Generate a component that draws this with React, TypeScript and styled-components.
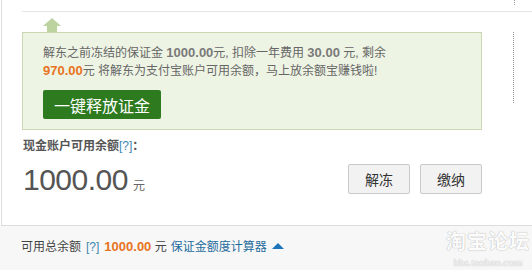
import React from 'react';
import styled, { createGlobalStyle } from 'styled-components';

const Global = createGlobalStyle`
  html, body { margin: 0; padding: 0; background: #fff; }
  body { font-family: "Liberation Sans", "Noto Sans CJK SC", sans-serif; font-size: 12px; color: #666; }
`;

const Page = styled.div`
  position: relative;
  width: 532px;
  height: 270px;
  overflow: hidden;
  background: #fff;
`;

const Panel = styled.div`
  margin-left: 1px;
  height: 226px;
  box-sizing: border-box;
  border-left: 1px solid #dcdcdc;
  border-bottom: 1px solid #dcdcdc;
`;

const TopStrip = styled.div`
  height: 11px;
  display: flex;
  justify-content: flex-end;
  padding-right: 17px;
`;

const Dots = styled.div<{ $h: number }>`
  width: 0;
  height: ${p => p.$h}px;
  border-left: 1px dotted #999;
`;

const Divider = styled.div`
  margin-left: 20px;
  border-top: 1px solid #e6e6e6;
`;

const Arrow = styled.div`
  margin: 6px 0 0 41px;
  width: 18px;
  height: 14px;
  display: flex;
  flex-direction: column;
  align-items: center;
`;

const ArrowHead = styled.div`
  width: 0;
  height: 0;
  border-left: 9px solid transparent;
  border-right: 9px solid transparent;
  border-bottom: 8px solid #bcd3a0;
`;

const ArrowStem = styled.div`
  width: 10px;
  height: 6px;
  background: #bcd3a0;
`;

const NoticeRow = styled.div`
  display: flex;
  align-items: flex-start;
`;

const Notice = styled.div`
  margin-left: 20px;
  width: 460px;
  height: 98px;
  box-sizing: border-box;
  border: 1px solid #c9d8b0;
  background: #eef4e4;
  padding: 11px 20px 0;
`;

const NoticeText = styled.p`
  margin: 0;
  line-height: 18px;
  color: #666;
`;

const Gray = styled.b`
  font-size: 13px;
  color: #7a7a7a;
`;

const Orange = styled.b<{ $size?: number }>`
  font-size: ${p => p.$size ?? 13}px;
  color: #e8731d;
`;

const ReleaseButton = styled.button`
  margin-top: 10px;
  width: 118px;
  height: 29px;
  border: 0;
  border-radius: 2px;
  background: #2e7a1f;
  color: #fff;
  font-family: inherit;
  font-size: 16px;
  padding: 0;
`;

const Side = styled.div`
  margin-left: 31px;
`;

const Balance = styled.div`
  padding: 7px 50px 0 21px;
`;

const Label = styled.div`
  font-weight: bold;
  color: #555;
  line-height: 18px;
`;

const Help = styled.span`
  font-weight: normal;
  color: #3a88b0;
`;

const AmountRow = styled.div`
  margin-top: 5px;
  display: flex;
  justify-content: space-between;
  align-items: center;
`;

const Amount = styled.div`
  color: #555;
  font-size: 30px;
  line-height: 40px;
  letter-spacing: -0.5px;
`;

const Unit = styled.span`
  font-size: 12px;
  margin-left: 5px;
  color: #666;
  letter-spacing: 0;
`;

const Actions = styled.div`
  display: flex;
  gap: 10px;
  margin-top: -8px;
`;

const GrayButton = styled.button`
  width: 62px;
  height: 30px;
  box-sizing: border-box;
  border: 1px solid #c9c9c9;
  border-radius: 2px;
  background: #f2f2f2;
  color: #333;
  font-family: inherit;
  font-size: 14px;
  padding: 0;
`;

const Footer = styled.div`
  height: 44px;
  background: #f7f7f7;
  padding: 12px 0 0 21px;
  box-sizing: border-box;
  line-height: 18px;
  color: #444;
  font-size: 12px;
`;

const FooterHelp = styled.span`
  color: #3a88b0;
  margin: 0 5px;
`;

const Link = styled.span`
  color: #1f6d9e;
  margin-left: 4px;
`;

const Caret = styled.span`
  display: inline-block;
  margin-left: 5px;
  width: 0;
  height: 0;
  border-left: 6px solid transparent;
  border-right: 6px solid transparent;
  border-bottom: 6px solid #1f75b8;
  vertical-align: 2px;
`;

const Watermark = styled.div`
  position: absolute;
  right: 2px;
  top: 230px;
  display: flex;
  flex-direction: column;
  align-items: center;
  gap: 4px;
  color: #fbfbfb;
  text-shadow: 0 0 1px #bbb, 0 0 1px #bbb;
  font-family: "Noto Sans CJK SC", sans-serif;
`;

const WmBig = styled.div`
  font-size: 20px;
  font-weight: bold;
  line-height: 22px;
  letter-spacing: 1px;
`;

const WmSmall = styled.div`
  font-family: "Liberation Serif", serif;
  font-size: 11px;
  line-height: 12px;
`;

export default function App() {
  return (
    <Page>
      <Global />
      <Panel>
        <TopStrip>
          <Dots $h={5} />
        </TopStrip>
        <Divider />
        <Arrow>
          <ArrowHead />
          <ArrowStem />
        </Arrow>
        <NoticeRow>
          <Notice>
            <NoticeText>
              解东之前冻结的保证金 <Gray>1000.00</Gray>元, 扣除一年费用 <Gray>30.00</Gray> 元, 剩余
              <br />
              <Orange>970.00</Orange>元 将解东为支付宝账户可用余额，马上放余额宝赚钱啦!
            </NoticeText>
            <ReleaseButton>一键释放证金</ReleaseButton>
          </Notice>
          <Side>
            <Dots $h={71} />
          </Side>
        </NoticeRow>
        <Balance>
          <Label>
            现金账户可用余额<Help>[?]</Help>：
          </Label>
          <AmountRow>
            <Amount>
              1000.00<Unit>元</Unit>
            </Amount>
            <Actions>
              <GrayButton>解冻</GrayButton>
              <GrayButton>缴纳</GrayButton>
            </Actions>
          </AmountRow>
        </Balance>
      </Panel>
      <Footer>
        可用总余额<FooterHelp>[?]</FooterHelp>
        <Orange $size={13}>1000.00</Orange> 元
        <Link>保证金额度计算器</Link>
        <Caret />
      </Footer>
      <Watermark>
        <WmBig>淘宝论坛</WmBig>
        <WmSmall>bbs.taobao.com</WmSmall>
      </Watermark>
    </Page>
  );
}
